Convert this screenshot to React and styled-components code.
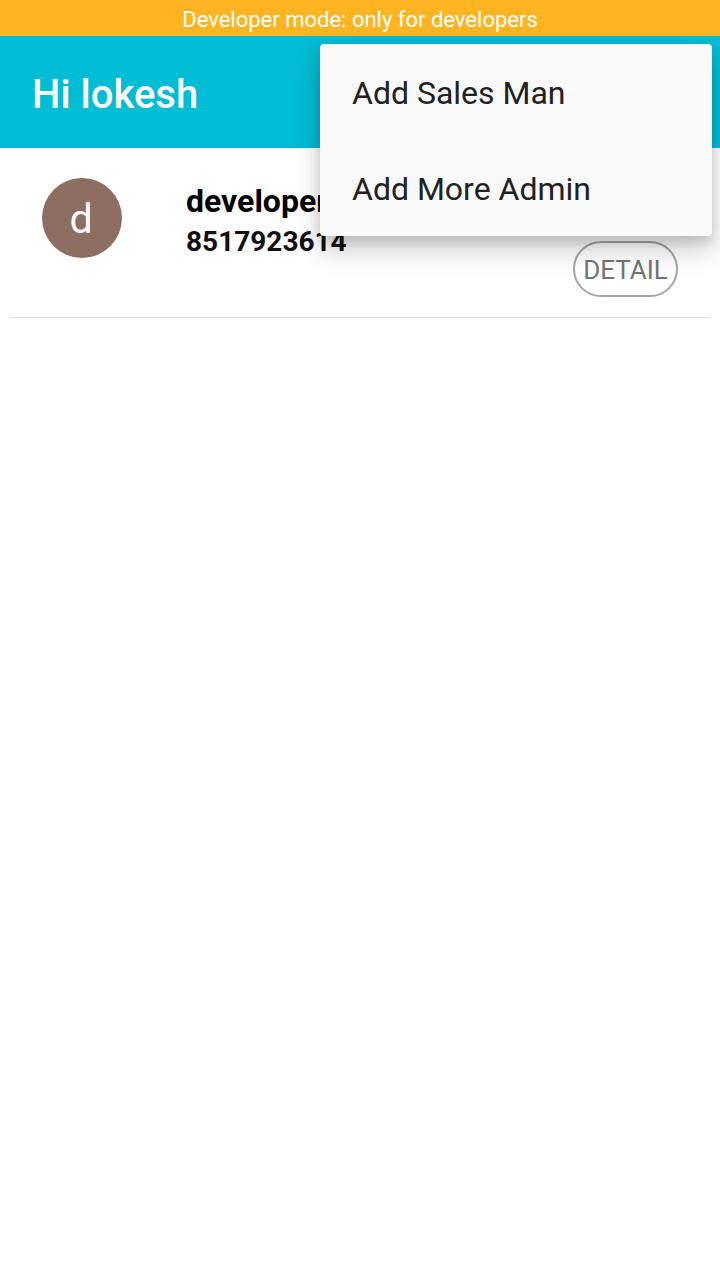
import React from "react";
import styled, { createGlobalStyle } from "styled-components";

const GlobalStyle = createGlobalStyle`
  html, body {
    margin: 0;
    background: #fff;
    font-family: Roboto, "Noto Sans", sans-serif;
  }
`;

const Page = styled.div`
  position: relative;
  width: 720px;
  height: 1280px;
  overflow: hidden;
  background: #fff;
`;

const DevBanner = styled.div`
  height: 36px;
  background: #ffb522;
  color: #fff;
  display: flex;
  align-items: center;
  justify-content: center;
  padding-top: 4px;
  box-sizing: border-box;
  font-size: 22px;
  line-height: 32px;
`;

const Toolbar = styled.header`
  height: 112px;
  background: #00bcd4;
  color: #fff;
  display: flex;
  align-items: center;
  padding: 4px 32px 0;
  box-sizing: border-box;
`;

const Title = styled.h1`
  margin: 0;
  font-size: 40px;
  font-weight: 500;
`;

const Row = styled.div`
  height: 170px;
  margin: 0 10px;
  border-bottom: 1px solid #e0e0e0;
  box-sizing: border-box;
  display: flex;
  align-items: flex-start;
`;

const Avatar = styled.div`
  width: 80px;
  height: 80px;
  margin: 30px 0 0 32px;
  padding: 2px 2px 0 0;
  box-sizing: border-box;
  border-radius: 50%;
  background: #8d6e63;
  color: #fff;
  font-size: 41px;
  display: flex;
  align-items: center;
  justify-content: center;
  flex-shrink: 0;
`;

const Info = styled.div`
  margin: 33px 0 0 64px;
  flex: 1;
`;

const Name = styled.div`
  font-size: 32px;
  line-height: 40px;
  font-weight: 700;
  color: #000;
`;

const Phone = styled.div`
  font-size: 28px;
  line-height: 42px;
  font-weight: 700;
  color: #111;
`;

const DetailButton = styled.button`
  width: 105px;
  height: 56px;
  margin: 93px 32px 0 0;
  padding: 2px 0 0;
  background: #fff;
  border: 2px solid #a6a6a6;
  border-radius: 28px;
  box-sizing: border-box;
  color: #757575;
  font-family: inherit;
  font-size: 26px;
  flex-shrink: 0;
`;

const Menu = styled.div`
  position: absolute;
  top: 44px;
  left: 320px;
  width: 392px;
  background: #fafafa;
  border-radius: 4px;
  box-shadow: 0 14px 28px rgba(0, 0, 0, 0.2), 0 6px 12px rgba(0, 0, 0, 0.12);
`;

const MenuItem = styled.div`
  height: 96px;
  padding: 2px 32px 0;
  box-sizing: border-box;
  display: flex;
  align-items: center;
  color: #212121;
  font-size: 32px;
`;

export default function App() {
  return (
    <Page>
      <GlobalStyle />
      <DevBanner>Developer mode: only for developers</DevBanner>
      <Toolbar>
        <Title>Hi lokesh</Title>
      </Toolbar>
      <Row>
        <Avatar>d</Avatar>
        <Info>
          <Name>developer</Name>
          <Phone>8517923614</Phone>
        </Info>
        <DetailButton>DETAIL</DetailButton>
      </Row>
      <Menu>
        <MenuItem>Add Sales Man</MenuItem>
        <MenuItem>Add More Admin</MenuItem>
      </Menu>
    </Page>
  );
}
